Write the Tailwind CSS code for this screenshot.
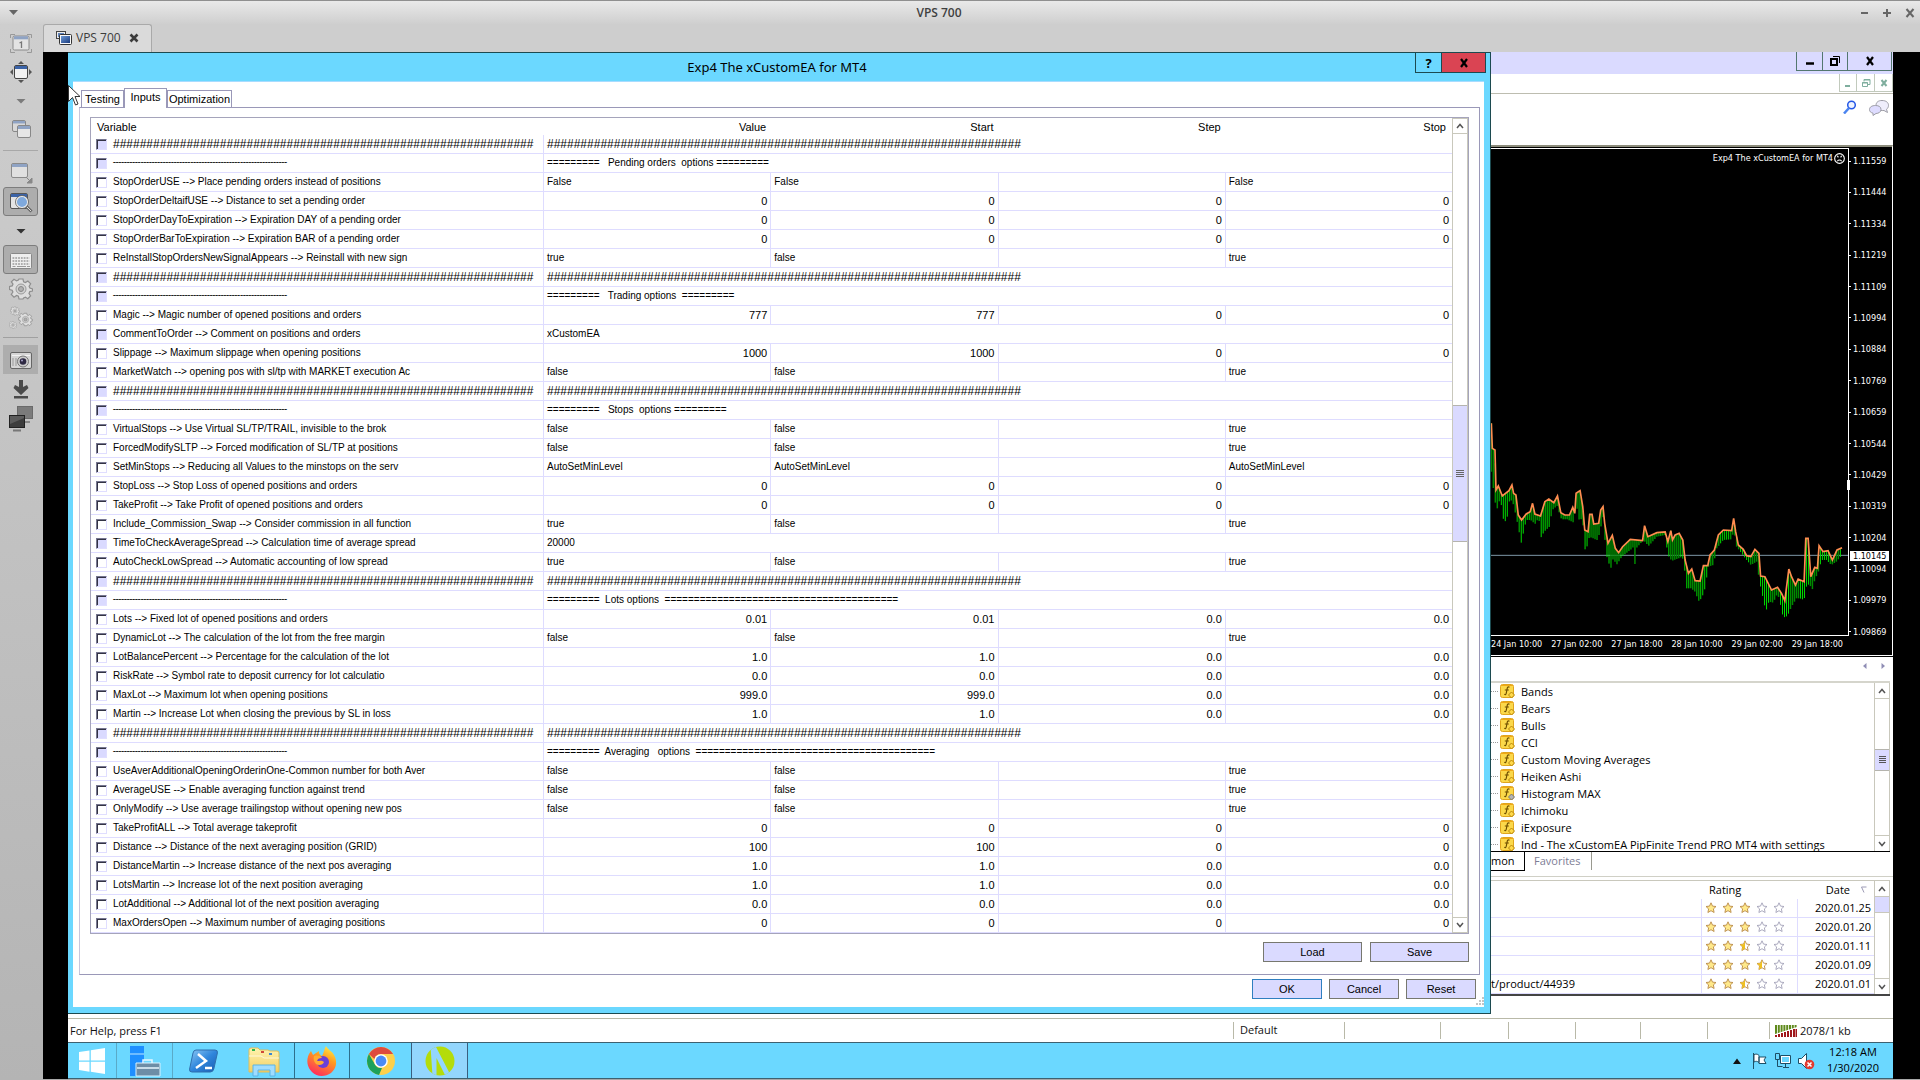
<!DOCTYPE html>
<html lang="en">
<head>
<meta charset="utf-8">
<title>VPS 700</title>
<script src="https://cdn.jsdelivr.net/npm/@tailwindcss/browser@4"></script>
</head>
<body class="flex min-h-screen flex-col overflow-x-hidden bg-[#b8b8b8] font-['Open_Sans','Noto_Sans',sans-serif] text-black">

<!-- shared icon symbols -->
<svg class="absolute size-0" aria-hidden="true">
  <defs>
    <linearGradient id="gFolder" x1="0" y1="0" x2="0" y2="1"><stop offset="0" stop-color="#fff3b0"/><stop offset="1" stop-color="#f3cf62"/></linearGradient>
    <linearGradient id="gPs" x1="0" y1="0" x2="1" y2="1"><stop offset="0" stop-color="#8cc8f4"/><stop offset=".5" stop-color="#2f86dc"/><stop offset="1" stop-color="#1a5cb0"/></linearGradient>
    <linearGradient id="gFox" x1=".8" y1="0" x2=".3" y2="1"><stop offset="0" stop-color="#fff04a"/><stop offset=".4" stop-color="#ff9a1f"/><stop offset="1" stop-color="#ff2a5f"/></linearGradient>
    <linearGradient id="gWin" x1="0" y1="0" x2="1" y2="1"><stop offset="0" stop-color="#6f9bd8"/><stop offset="1" stop-color="#17397c"/></linearGradient>
    <clipPath id="disc"><circle cx="15" cy="15" r="14.500"/></clipPath>
    <symbol id="gear" viewBox="0 0 24 24">
      <path d="M10 2h4l.6 2.800 1.800.8 2.500-1.600 2.800 2.800-1.600 2.500.8 1.800L23.500 12v2l-2.700.6-.8 1.800 1.600 2.500-2.800 2.800-2.400-1.600-1.800.8L14 22h-4l-.6-2.800-1.800-.8L5 20.200 2.300 17.400 3.900 15l-.8-1.800L.5 12.500v-3l2.700-.6.8-1.800L2.400 4.800 5 2.300 7.600 3.900l1.800-.8z" fill="#dedede" stroke="#8e8e8e" stroke-width="1.200"/>
      <circle cx="12" cy="12" r="5" fill="#d2d2d2" stroke="#9a9a9a"/><circle cx="12" cy="12" r="2.500" fill="#b0b0b0" stroke="#888"/>
    </symbol>
    <symbol id="fx" viewBox="0 0 15 15">
      <rect x=".5" y=".5" width="13" height="13" rx="2" fill="#fbd84a" stroke="#e0a51c"/>
      <path d="M1 1.500h12" stroke="#f0a818"/>
      <path d="M9.500 3.200c-2-.8-2.200.6-2.500 2.300L6.300 9c-.3 1.500-1 1.800-2 1.300M4.800 6h4" stroke="#6e4f00" stroke-width="1.200" fill="none"/>
    </symbol>
    <path id="star" d="M0-5.200 1.500-1.900 5-1.500 2.400.9 3.100 4.500 0 2.700-3.100 4.500-2.400.9-5-1.500-1.500-1.900z"/>
  </defs>
</svg>

<header class="flex h-6 items-center border-t border-[#8f8f8f] bg-linear-to-b from-[#e9e9e9] to-[#cfcfcf] px-1 text-[#3f3f3f]">
  <svg class="ml-1 h-2 w-3" viewBox="0 0 12 8"><path d="M1 1h9L5.500 6z" fill="#666"/></svg>
  <h1 class="flex-1 text-center text-xs font-semibold">VPS 700</h1>
  <div class="flex gap-[11px]">
    <button aria-label="Minimize" class="size-3"><svg viewBox="0 0 12 12"><path d="M3 6h7" stroke="#666" stroke-width="2"/></svg></button>
    <button aria-label="Maximize" class="size-3"><svg viewBox="0 0 12 12"><path d="M2 6h8M6 2v8" stroke="#666" stroke-width="2"/></svg></button>
    <button aria-label="Close" class="size-3"><svg viewBox="0 0 12 12"><path d="M2.500 2l7 8M9.500 2l-7 8" stroke="#666" stroke-width="2"/></svg></button>
  </div>
</header>

<div class="flex flex-1">
  <!-- viewer toolbar -->
  <aside class="flex w-[43px] shrink-0 flex-col bg-linear-to-b from-[#cecece] to-[#b4b4b4] pt-1 pr-[5px] pl-[3px]">
    <button aria-label="Original size" class="flex h-[29px] items-center justify-center"><svg class="size-6" viewBox="0 0 24 24" fill="none"><path d="M1.500 7V3.500H6M18 3.500h4.500V7M22.500 18v3.500H18M6 21.500H1.500V18" stroke="#999"/><rect x="4" y="5" width="16" height="14" rx="1.500" fill="#e3e3e3" stroke="#8a8a8a"/><path d="M5 6.800h14" stroke="#8fa3c4" stroke-width="3"/><path d="M10.500 12l2-1v6" stroke="#777" stroke-width="1.300"/></svg></button>
    <button aria-label="Fit window" class="flex h-[29px] items-center justify-center"><svg class="size-6" viewBox="0 0 24 24"><path d="M12 1l3 3H9zM12 23l3-3H9zM1 12l3-3v6zM23 12l-3-3v6z" fill="#555"/><rect x="5.500" y="5.500" width="13" height="13" rx="1.500" fill="#f1f1f1" stroke="#444"/><path d="M6 7.500h12" stroke="#3c64a8" stroke-width="3"/></svg></button>
    <button aria-label="Screen modes" class="flex h-[29px] items-center justify-center"><svg class="size-3" viewBox="0 0 12 12"><path d="M1.500 4h9L6 8.500z" fill="#7b7b7b"/></svg></button>
    <button aria-label="Duplicate window" class="flex h-[29px] items-center justify-center"><svg class="size-6" viewBox="0 0 24 24"><rect x="3.500" y="2.500" width="13" height="11" rx="1.500" fill="#d8d8d8" stroke="#888"/><path d="M4 4.200h12" stroke="#8fa3c4" stroke-width="2.500"/><rect x="8.500" y="7.500" width="13" height="12" rx="1.500" fill="#e6e6e6" stroke="#888"/><path d="M9 9.500h12" stroke="#8fa3c4" stroke-width="3"/></svg></button>
    <hr class="mt-1.5 mb-[7px] border-[#a8a8a8]">
    <button aria-label="Resize" class="flex h-[29px] items-center justify-center"><svg class="size-6" viewBox="0 0 24 24"><rect x="2.500" y="2.500" width="16" height="14" rx="1.500" fill="#e0e0e0" stroke="#8a8a8a"/><path d="M3 4.500h15" stroke="#8fa3c4" stroke-width="3"/><path d="M17 16l5 5M23 17v5h-5z" stroke="#888" fill="#888"/></svg></button>
    <button aria-label="Scaled mode" class="flex h-[29px] items-center justify-center rounded-[3px] border border-[#7d7d7d] bg-[#adadad]"><svg class="size-6" viewBox="0 0 24 24"><rect x="1.500" y="3.500" width="17" height="15" rx="1.500" fill="#e4e4e4" stroke="#555"/><path d="M2 5.500h16" stroke="#3c64a8" stroke-width="3"/><path d="M17.500 16.500l5 5" stroke="#666" stroke-width="3"/><path d="M18 17l4 4" stroke="#ddd"/><circle cx="13" cy="12" r="5.800" fill="#7fa9dd" stroke="#f0f0f0" stroke-width="1.500"/><circle cx="13" cy="12" r="6.500" fill="none" stroke="#444" stroke-width=".7"/></svg></button>
    <button aria-label="Scale options" class="flex h-[29px] items-center justify-center"><svg class="size-3" viewBox="0 0 12 12"><path d="M1.500 4h9L6 8.500z" fill="#333"/></svg></button>
    <button aria-label="Grab keyboard" class="flex h-[29px] items-center justify-center rounded-[3px] border border-[#7d7d7d] bg-[#adadad]"><svg class="size-6" viewBox="0 0 24 24"><rect x="1.500" y="5.500" width="21" height="15" rx="1" fill="#eee" stroke="#888"/><path d="M3.500 10h17M3.500 13h17M3.500 16h17" stroke="#9a9a9a" stroke-width="1.500" stroke-dasharray="1.800 1"/><path d="M3.500 18.500h3M8 18.500h9M18 18.500h3" stroke="#9a9a9a"/></svg></button>
    <button aria-label="Preferences" class="flex h-[29px] items-center justify-center"><svg class="size-6"><use href="#gear"/></svg></button>
    <button aria-label="Tools" class="flex h-[29px] items-center justify-center"><svg class="size-6" viewBox="0 0 24 24"><use href="#gear" x="1" y="0" width="10" height="10"/><use href="#gear" x="0" y="15" width="8" height="8"/><use href="#gear" x="9" y="6" width="15" height="15"/></svg></button>
    <hr class="mt-[5px] mb-[7px] border-[#a0a0a0]">
    <button aria-label="Screenshot" class="flex h-[29px] items-center justify-center bg-[#adadad]"><svg class="size-6" viewBox="0 0 24 24"><rect x="1.500" y="4.500" width="21" height="16" rx="1.500" fill="#d6d6d6" stroke="#666"/><path d="M3 7.500h18" stroke="#f4f4f4"/><path d="M4 10v8M7 10v8" stroke="#999"/><circle cx="14" cy="13.500" r="5.500" fill="#ccc" stroke="#777"/><circle cx="14" cy="13.500" r="3.300" fill="#2f2a44"/><circle cx="13" cy="12.500" r="1" fill="#aaa6cc"/></svg></button>
    <button aria-label="Minimize window" class="flex h-[29px] items-center justify-center"><svg class="size-6" viewBox="0 0 24 24"><path d="M10 3h4v7l4-2 1.500 3L12 18l-7.500-7L6 8l4 2zM5 19h14v2.500H5z" fill="#4a4a4a"/></svg></button>
    <button aria-label="Disconnect" class="flex h-[29px] items-center justify-center"><svg class="h-7 w-6" viewBox="0 0 24 28"><rect x="8.500" y="2.500" width="15" height="12" fill="#7b7b7b" stroke="#6a6a6a"/><path d="M15 18h6" stroke="#888" stroke-width="2"/><rect x=".5" y="11.500" width="15" height="12" fill="#3d3d3d" stroke="#222"/><path d="M1 20L15 14v-2H1z" fill="#5c5c5c"/><path d="M4 26.500h8" stroke="#777" stroke-width="2"/></svg></button>
  </aside>

  <div class="flex min-w-0 flex-1 flex-col">
    <div class="flex h-7 items-end bg-[#cecece]">
      <div class="flex h-7 w-[109px] items-center rounded-t-[3px] border border-b-0 border-[#a9a9a9] bg-[#dadada] pb-px pl-3 text-[#3c3c3c]">
        <svg class="size-4" viewBox="0 0 16 16"><rect x=".5" y="1.500" width="9" height="7" fill="#eee" stroke="#444"/><path d="M2 3h6v4H2z" fill="#5f83bd"/><rect x="3.500" y="4.500" width="12" height="10" rx="1" fill="#fafafa" stroke="#333"/><rect x="5" y="6" width="9" height="7" fill="url(#gWin)"/></svg>
        <span class="ml-1 text-xs">VPS 700</span>
        <button aria-label="Close tab" class="ml-2 size-2.5"><svg viewBox="0 0 10 10"><path d="M1.500 1.500l7 7M8.500 1.500l-7 7" stroke="#3c3c3c" stroke-width="2.600"/></svg></button>
      </div>
    </div>

    <div class="flex flex-1 flex-col bg-black pr-[27px] pl-[25px]">
      <div class="flex bg-white">
        <!-- expert properties window -->
        <section class="relative min-w-0 flex-1 border-t border-r border-b border-[#1c4a50] bg-[#6bd8ff] pr-1.5 pb-1.5 pl-[5px]">
          <svg class="absolute top-8 left-0 h-[22px] w-[14px]" viewBox="0 0 14 22"><path d="M.5.500v16l4-4 3 7.500 2.500-1L7 11.500h5z" fill="#fff" stroke="#333"/></svg>
          <div class="-mr-0.5 flex h-7 items-start">
            <h2 class="flex-1 self-center pl-[66px] text-center font-['Noto_Sans'] text-[13px] leading-5">Exp4 The xCustomEA for MT4</h2>
            <div class="flex border border-t-0 border-[#1c4a50] text-[13px] leading-[18px] font-bold">
              <button class="h-[19px] w-[26px] border-r border-[#1c4a50]">?</button>
              <button aria-label="Close" class="flex h-[19px] w-[43px] items-center justify-center bg-[#da4453]"><svg class="size-2.5" viewBox="0 0 10 10"><path d="M2 1l6 8M8 1L2 9" stroke="#000" stroke-width="2.200"/></svg></button>
            </div>
          </div>
          <div class="border-t border-[#a8dcff] bg-white pt-1.5 pr-1 pb-2 pl-1.5 font-['Liberation_Sans',Arial,sans-serif] text-[10px] leading-3">
            <div class="flex items-end pl-0.5 text-[11px]" role="tablist">
              <button role="tab" class="h-[17px] w-[43px] border border-b-0 border-[#9a98b8]">Testing</button>
              <button role="tab" aria-selected="true" class="-mb-px h-5 w-[43px] border border-b-0 border-[#9a98b8] bg-white pb-1">Inputs</button>
              <button role="tab" class="h-[17px] w-[65px] border border-b-0 border-[#9a98b8]">Optimization</button>
            </div>
            <div class="border border-[#9a98b8] border-l-[#c8c6dc] px-2.5 pt-[9px] pb-3">
              <div class="flex border border-[#a5a4bb]">
                <table class="w-full min-w-0 flex-1 table-fixed border-separate border-spacing-0">
                  <thead>
                    <tr class="h-[17px] text-[11px]">
                      <th class="w-[452px] pl-1.5 text-left font-normal">Variable</th>
                      <th class="pr-1 text-right font-normal">Value</th>
                      <th class="pr-1 text-right font-normal">Start</th>
                      <th class="pr-1 text-right font-normal">Step</th>
                      <th class="pr-1.5 text-right font-normal">Stop</th>
                    </tr>
                  </thead>
                  <tbody id="inputs"></tbody>
                </table>
                <div class="flex w-4 flex-col border-x border-[#c9c8bc]">
                  <button aria-label="Scroll up" class="flex h-4 items-center justify-center border-y border-[#c9c8bc]"><svg class="h-1.5 w-2" viewBox="0 0 8 6"><path d="M1 5l3-3.500L7 5" fill="none" stroke="#555" stroke-width="1.500"/></svg></button>
                  <div class="flex-[270]"></div>
                  <div class="flex h-[137px] flex-col items-center justify-center gap-px border-y border-[#b5b4ae] bg-[#dadaff]"><i class="h-px w-2 bg-[#666]"></i><i class="h-px w-2 bg-[#666]"></i><i class="h-px w-2 bg-[#666]"></i><i class="h-px w-2 bg-[#666]"></i></div>
                  <div class="flex-[374]"></div>
                  <button aria-label="Scroll down" class="flex h-4 items-center justify-center border-y border-[#c9c8bc]"><svg class="h-1.5 w-2" viewBox="0 0 8 6"><path d="M1 1l3 3.500L7 1" fill="none" stroke="#555" stroke-width="1.500"/></svg></button>
                </div>
              </div>
              <div class="flex justify-end gap-2 pt-2 text-[11px]">
                <button class="h-5 w-[99px] border border-[#77786f] bg-[#dadaff]">Load</button>
                <button class="h-5 w-[99px] border border-[#77786f] bg-[#dadaff]">Save</button>
              </div>
            </div>
            <div class="flex justify-end gap-[7px] pt-1 pr-1 text-[11px]">
              <button class="h-5 w-[70px] border border-[#2f7fc0] bg-[#dadaff]">OK</button>
              <button class="h-5 w-[70px] border border-[#77786f] bg-[#dadaff]">Cancel</button>
              <button class="h-5 w-[70px] border border-[#77786f] bg-[#dadaff]">Reset</button>
            </div>
          </div>
          <svg class="absolute right-1.5 bottom-2 size-2" viewBox="0 0 8 8" fill="#c4c4c4"><path d="M6 0h2v2H6zM3 3h2v2H3zM6 3h2v2H6zM0 6h2v2H0zM3 6h2v2H3zM6 6h2v2H6z"/></svg>
        </section>

        <!-- terminal window behind -->
        <section class="flex w-[402px] shrink-0 flex-col overflow-hidden">
          <div class="flex h-[22px] justify-end bg-[#dadaff] pr-px">
            <div class="flex h-[19px] border border-t-0 border-[#53776f]">
              <button aria-label="Minimize" class="flex w-[26px] items-center justify-center border-r border-[#53776f]"><svg class="size-3" viewBox="0 0 12 12"><path d="M2 8.500h8" stroke="#000" stroke-width="2.500"/></svg></button>
              <button aria-label="Restore" class="flex w-[25px] items-center justify-center border-r border-[#53776f]"><svg class="size-3" viewBox="0 0 12 12" fill="none" stroke="#000"><rect x="2" y="4" width="6" height="6" stroke-width="2"/><path d="M4 1.500h6.500V8"/></svg></button>
              <button aria-label="Close" class="flex w-[43px] items-center justify-center"><svg class="size-3" viewBox="0 0 12 12"><path d="M3 2l6 8M9 2L3 10" stroke="#000" stroke-width="2.200"/></svg></button>
            </div>
          </div>
          <div class="flex h-5 justify-end border-b border-[#bdbdb0]">
            <div class="flex h-[18px] border border-t-0 border-[#c2cabd]">
              <button aria-label="Minimize chart" class="flex w-[17px] items-center justify-center border-r border-[#c2cabd]"><svg class="size-2.5" viewBox="0 0 10 10"><path d="M2 8h5" stroke="#7fae9e" stroke-width="2"/></svg></button>
              <button aria-label="Restore chart" class="flex w-[18px] items-center justify-center border-r border-[#c2cabd]"><svg class="size-2.5" viewBox="0 0 10 10" fill="none" stroke="#7fae9e"><path d="M3 3.500V1.500h6v5H7M1.500 4.500h5v4h-5zM3 2h6M1 5h6"/></svg></button>
              <button aria-label="Close chart" class="flex w-[17px] items-center justify-center"><svg class="size-2.5" viewBox="0 0 10 10"><path d="M2.500 2l5 6M7.500 2l-5 6" stroke="#7fae9e" stroke-width="2"/></svg></button>
            </div>
          </div>
          <div class="flex h-[51px] justify-end gap-3 pt-1.5 pr-1">
            <button aria-label="Search" class="size-3.5"><svg viewBox="0 0 14 14"><circle cx="8.500" cy="5" r="3.800" fill="#eef3ff" stroke="#2457e6" stroke-width="1.500"/><path d="M6 8l-5 5.500" stroke="#4a84f0" stroke-width="2.500"/></svg></button>
            <button aria-label="Chat" class="h-4 w-5"><svg viewBox="0 0 20 16"><path d="M13 .5c4 0 6.500 2 6.500 4.800 0 2-.9 3.200-2 4l1 3.200-3.500-2c-5 .4-8-1.500-8-5S9.500.5 13 .5z" fill="#efeefc" stroke="#9d9da6"/><path d="M6.500 5.500c3.500 0 5.500 1.500 5.500 4s-2.500 4-5 4L4 15.500v-2.300C1.500 12.500.5 11.500.5 9.500c0-2.500 2.500-4 6-4z" fill="#dedcff" stroke="#9d9da6"/></svg></button>
          </div>

          <div class="flex min-h-0 flex-1 flex-col border-t-2 border-r border-b border-[#8c8c7c] border-r-white border-b-white bg-black pt-px text-[9px] leading-3 text-white">
            <div class="flex min-h-0 flex-1 font-['DejaVu_Sans_Condensed','DejaVu_Sans',sans-serif]">
              <div class="relative flex min-w-0 flex-1 flex-col">
                <div class="flex min-h-0 flex-1 border-t border-r border-b border-white">
                  <svg id="chart" class="h-0 min-h-full w-full" viewBox="0 0 358 486" preserveAspectRatio="none"></svg>
                </div>
                <div class="absolute top-1 right-1 flex items-center gap-px">
                  Exp4 The xCustomEA for MT4
                  <svg class="size-[11px]" viewBox="0 0 10 10" fill="none" stroke="#fff"><circle cx="5" cy="5" r="4.400"/><path d="M3 2.500l1 1.500M7 2.500L6 4M3 7.500c1-1.500 3-1.500 4 0"/></svg>
                </div>
                <div class="flex h-[19px] justify-between pt-0.5 pr-1.5 whitespace-nowrap">
                  <span>24 Jan 10:00</span><span>27 Jan 02:00</span><span>27 Jan 18:00</span><span>28 Jan 10:00</span><span>29 Jan 02:00</span><span>29 Jan 18:00</span>
                </div>
              </div>
              <div class="relative w-[43px] pt-[7px] pb-[17px]">
                <div id="prices" class="flex h-full flex-col justify-between"></div>
                <i class="absolute top-[332px] -left-0.5 h-[10px] w-[3px] bg-white"></i>
                <span class="absolute top-[403px] left-px h-[10px] w-[39px] bg-white pl-[3px] text-[9px] leading-[10px] text-black">1.10145</span>
              </div>
            </div>
          </div>

          <div class="flex h-[25px] items-start justify-end gap-2.5 border-t border-black bg-white pt-[5px] pr-1.5">
            <svg class="size-2" viewBox="0 0 8 8"><path d="M5.500 1v6L2 4z" fill="#8f8db5"/></svg>
            <svg class="size-2" viewBox="0 0 8 8"><path d="M2.500 1v6L6 4z" fill="#8f8db5"/></svg>
          </div>
          <div class="mr-[3px] flex h-[171px] border-t-2 border-b border-[#d5d5cc] border-b-black">
            <ul id="tree" class="min-w-0 flex-1 overflow-hidden text-[11px] leading-[17px]"></ul>
            <div class="flex w-4 flex-col border-x border-[#c9c8bc]">
              <button aria-label="Scroll up" class="flex h-4 items-center justify-center border-b border-[#c9c8bc]"><svg class="h-1.5 w-2" viewBox="0 0 8 6"><path d="M1 5l3-3.500L7 5" fill="none" stroke="#555" stroke-width="1.500"/></svg></button>
              <div class="flex-[50]"></div>
              <div class="flex h-[22px] flex-col items-center justify-center gap-px border-y border-[#b5b4ae] bg-[#dadaff]"><i class="h-px w-[7px] bg-[#555]"></i><i class="h-px w-[7px] bg-[#555]"></i><i class="h-px w-[7px] bg-[#555]"></i><i class="h-px w-[7px] bg-[#555]"></i></div>
              <div class="flex-[65]"></div>
              <button aria-label="Scroll down" class="flex h-4 items-center justify-center border-t border-[#c9c8bc]"><svg class="h-1.5 w-2" viewBox="0 0 8 6"><path d="M1 1l3 3.500L7 1" fill="none" stroke="#555" stroke-width="1.500"/></svg></button>
            </div>
          </div>
          <div class="flex h-[25px] items-start border-b border-[#d0d0c6] text-[11px] leading-[18px]">
            <button class="h-[19px] w-[34px] border-r border-b border-black text-left">mon</button>
            <button class="ml-[9px] border-r border-[#9a9a90] pr-2.5 text-[#7d7d95]">Favorites</button>
          </div>
          <div class="mt-[3px] mr-[3px] mb-[18px] flex border-t border-b-2 border-[#c9c8bc] border-b-[#444]">
            <table class="w-full min-w-0 flex-1 table-fixed border-separate border-spacing-0 text-[11px] leading-3">
              <thead><tr class="h-[18px]"><th></th><th class="w-24 pl-2 text-left font-normal">Rating</th><th class="w-[77px] pr-1.5 font-normal"><span class="flex items-center justify-end gap-2.5">Date<svg class="size-2" viewBox="0 0 8 8"><path d="M6.500 1h-5L4 6.500" fill="none" stroke="#9c9ab5"/></svg></span></th></tr></thead>
              <tbody id="ratings"></tbody>
            </table>
            <div class="flex w-4 flex-col border-x border-[#c9c8bc]">
              <button aria-label="Scroll up" class="flex h-4 items-center justify-center border-b border-[#c9c8bc]"><svg class="h-1.5 w-2" viewBox="0 0 8 6"><path d="M1 5l3-3.500L7 5" fill="none" stroke="#555" stroke-width="1.500"/></svg></button>
              <div class="h-4 border-b border-[#c9c8bc] bg-[#dadaff]"></div>
              <div class="flex-1"></div>
              <button aria-label="Scroll down" class="flex h-4 items-center justify-center border-t border-[#c9c8bc]"><svg class="h-1.5 w-2" viewBox="0 0 8 6"><path d="M1 1l3 3.500L7 1" fill="none" stroke="#555" stroke-width="1.500"/></svg></button>
            </div>
          </div>
        </section>
      </div>

      <!-- status bar -->
      <div class="bg-white pt-1">
        <div class="flex h-6 items-center border-t border-[#b9b9a8] text-[11px] leading-4 text-[#111]">
          <span class="flex-1 pl-0.5">For Help, press F1</span>
          <span class="h-[17px] w-[111px] border-l border-[#b9b9a8] pl-1.5">Default</span>
          <span class="h-[17px] w-24 border-l border-[#b9b9a8]"></span>
          <span class="h-[17px] w-[68px] border-l border-[#b9b9a8]"></span>
          <span class="h-[17px] w-[67px] border-l border-[#b9b9a8]"></span>
          <span class="h-[17px] w-[65px] border-l border-[#b9b9a8]"></span>
          <span class="h-[17px] w-[67px] border-l border-[#b9b9a8]"></span>
          <span class="h-[17px] w-[62px] border-l border-[#b9b9a8]"></span>
          <span class="flex h-[17px] w-[124px] items-center gap-[3px] border-l border-[#b9b9a8] pl-[5px]">
            <svg class="h-3 w-[22px]" viewBox="0 0 22 12"><path d="M0 6h22" stroke="#5f8a1c" stroke-width="12" stroke-dasharray="2 .8"/><path d="M0 12V9L22 2v10z" fill="#fff"/><path d="M1 12v-2M4 12V9M7 12V8M10 12V7M13 12V6M16 12V5M19 12V4M21.500 12V4" stroke="#a0181c" stroke-width="2"/></svg>2078/1 kb</span>
        </div>
      </div>

      <!-- Windows taskbar -->
      <nav class="flex h-[37px] items-stretch border-y border-[#3d6170] bg-[#6bd8ff]">
        <button aria-label="Start" class="flex w-[49px] items-center justify-center border-r border-[#5aaac8]"><svg class="h-7 w-7" viewBox="0 0 28 28" fill="#fff"><path d="M1 5l10.500-1.600v10H1zM12.800 3.200L27 1v12.400H12.800zM1 14.700h10.500v10L1 23zM12.800 14.700H27V27l-14.200-2.200z"/></svg></button>
        <button aria-label="Server Manager" class="flex w-14 items-center justify-center border-r border-[#5aaac8]"><svg class="size-8" viewBox="0 0 32 32"><path d="M1 1h14v30H1z" fill="#1e8fff"/><path d="M1 9h14" stroke="#bfe8ff"/><path d="M7 18h24v13H7z" fill="#6d8da6" stroke="#d8f2ff"/><path d="M14 18v-3h9v3M8 23h22" stroke="#e6f6ff" fill="none" stroke-width="1.500"/></svg></button>
        <button aria-label="PowerShell" class="flex w-[61px] items-center justify-center"><svg class="h-7 w-8" viewBox="0 0 32 28"><path d="M8 3h19q3 0 2.400 3l-3.600 16q-.8 3-3.600 3H4q-3 0-2.400-3L5 6q.6-3 3-3z" fill="url(#gPs)" stroke="#2f6fae"/><path d="M10 7l8 7-10 7M17 21h7" fill="none" stroke="#fff" stroke-width="2.500"/></svg></button>
        <button aria-label="File Explorer" class="flex w-[60px] items-center justify-center"><svg class="h-8 w-8" viewBox="0 0 32 32"><path d="M1 5q0-2 2-2h7l2 2h8l2 1h7q2 0 2 2v19H1z" fill="url(#gFolder)" stroke="#e0bd5a"/><path d="M4 4h3v2H4z" fill="#2eb84a"/><path d="M13 6h3v2h-3z" fill="#d0483a"/><path d="M21 8h3v2h-3z" fill="#3a86d0"/><path d="M1 11h12l3 2h15" stroke="#fff8d8" fill="none"/><path d="M5 31V20h22v11h-5v-6H10v6z" fill="#9fdcff" stroke="#5bb4e6"/></svg></button>
        <button aria-label="Firefox" class="flex w-14 items-center justify-center border-x border-[#2d6f8c]"><svg class="size-8" viewBox="0 0 32 32"><path d="M20 1c1 3 6 5 8 9 4 7 2 14-3 18-6 4-14 4-19-1C1 22 0 15 3 9l2-3 2 4 6-4c0 3 1 4 3 5 2-3 2-7 4-10z" fill="url(#gFox)"/><circle cx="17" cy="17" r="6" fill="#6a3fd8"/><path d="M8 11c4-1 7 0 8 2-3 0-5 1-5 3 2 0 5-1 7 1-1 3-5 4-8 2-2-2-3-5-2-8z" fill="#ffac33"/></svg></button>
        <button aria-label="Chrome" class="flex w-[61px] items-center justify-center"><svg class="h-[30px] w-[30px]" viewBox="0 0 30 30"><circle cx="15" cy="15" r="14" fill="#fdd04a"/><path d="M2.900 8A14 14 0 0 1 27.100 8H15a7 7 0 0 0-6.600 5z" fill="#dd4b3e"/><path d="M2.900 8l6 10.500A7 7 0 0 0 16 22l-3 6.900A14 14 0 0 1 2.900 8z" fill="#1da15a"/><circle cx="15" cy="15" r="6.800" fill="#fff"/><circle cx="15" cy="15" r="5.400" fill="#4a8bf5"/></svg></button>
        <button aria-label="Trading terminal" class="flex w-[57px] items-center justify-center border-x border-[#3a5f80] bg-[#93d6fd]"><svg class="h-[30px] w-[30px]" viewBox="0 0 30 30"><g clip-path="url(#disc)"><path d="M0 0h30v30H0z" fill="#b4dc0a"/><path d="M5.500 0h5l14 27-4 3L11.500 12v18h-4z" fill="#93d6fd"/></g></svg></button>
        <div class="flex flex-1 items-center justify-end pr-3.5 text-right">
          <svg class="mr-2 h-2 w-3" viewBox="0 0 12 8"><path d="M2 7h8L6 1.500z" fill="#111"/></svg>
          <svg class="mr-[5px] size-[18px]" viewBox="0 0 18 18" stroke="#1d4f66" fill="#fff"><path d="M2.500 1v16M3 2.500c3-1 4 0 5 1v7c-2-1.500-3-1.500-5-.5zM8 5h7l-2 3 2 3.500H8z"/></svg>
          <svg class="mr-[5px] size-[18px]" viewBox="0 0 18 18" stroke="#1d4f66" fill="#fff"><path d="M6.500 3.500h10v8h-10zM9 15.500h6M11.500 12v3" /><path d="M8 5h7v5H8z" fill="#6bd8ff" stroke="none"/><path d="M1.500 1.500h4v6h-4zM3.500 8v6.500h5" fill="none"/></svg>
          <svg class="mr-3 size-[18px]" viewBox="0 0 18 18"><path d="M1.500 6.500h3l5-5v15l-5-5h-3z" fill="#fff" stroke="#1d4f66"/><circle cx="12.500" cy="12.500" r="4.800" fill="#e23b30"/><path d="M10.500 10.500l4 4M14.500 10.500l-4 4" stroke="#fff" stroke-width="1.500"/></svg>
          <div class="w-[52px] pb-px text-center text-[11px] leading-4 whitespace-nowrap">12:18 AM<br>1/30/2020</div>
        </div>
      </nav>
      <div class="-mr-[27px] -ml-[25px] flex-1 bg-[#a8a8a8]"></div>
    </div>
  </div>
</div>

<script>
  // [name, value, start, step, stop]; a single value spans all columns, '#' and '-' are separators
  const rows = [
    ['#'], ['-', '=========   Pending orders  options ========='],
    ['StopOrderUSE --> Place pending orders instead of positions', 'False', 'False', '', 'False'],
    ['StopOrderDeltaifUSE --> Distance to set a pending order', '0', '0', '0', '0'],
    ['StopOrderDayToExpiration --> Expiration DAY of a pending order', '0', '0', '0', '0'],
    ['StopOrderBarToExpiration --> Expiration BAR of a pending order', '0', '0', '0', '0'],
    ['ReInstallStopOrdersNewSignalAppears --> Reinstall with new sign', 'true', 'false', '', 'true'],
    ['#'], ['-', '=========   Trading options  ========='],
    ['Magic --> Magic number of opened positions and orders', '777', '777', '0', '0'],
    ['CommentToOrder --> Comment on positions and orders', 'xCustomEA'],
    ['Slippage --> Maximum slippage when opening positions', '1000', '1000', '0', '0'],
    ['MarketWatch --> opening pos with sl/tp with MARKET execution Ac', 'false', 'false', '', 'true'],
    ['#'], ['-', '=========   Stops  options ========='],
    ['VirtualStops --> Use Virtual SL/TP/TRAIL, invisible to the brok', 'false', 'false', '', 'true'],
    ['ForcedModifySLTP --> Forced modification of SL/TP at positions', 'false', 'false', '', 'true'],
    ['SetMinStops --> Reducing all Values to the minstops on the serv', 'AutoSetMinLevel', 'AutoSetMinLevel', '', 'AutoSetMinLevel'],
    ['StopLoss --> Stop Loss of opened positions and orders', '0', '0', '0', '0'],
    ['TakeProfit --> Take Profit of opened positions and orders', '0', '0', '0', '0'],
    ['Include_Commission_Swap --> Consider commission in all function', 'true', 'false', '', 'true'],
    ['TimeToCheckAverageSpread --> Calculation time of average spread', '20000'],
    ['AutoCheckLowSpread --> Automatic accounting of low spread', 'true', 'false', '', 'true'],
    ['#'], ['-', '=========  Lots options  ' + '='.repeat(40)],
    ['Lots --> Fixed lot of opened positions and orders', '0.01', '0.01', '0.0', '0.0'],
    ['DynamicLot --> The calculation of the lot from the free margin', 'false', 'false', '', 'true'],
    ['LotBalancePercent --> Percentage for the calculation of the lot', '1.0', '1.0', '0.0', '0.0'],
    ['RiskRate --> Symbol rate to deposit currency for lot calculatio', '0.0', '0.0', '0.0', '0.0'],
    ['MaxLot --> Maximum lot when opening positions', '999.0', '999.0', '0.0', '0.0'],
    ['Martin --> Increase Lot when closing the previous by SL in loss', '1.0', '1.0', '0.0', '0.0'],
    ['#'], ['-', '=========  Averaging   options  ' + '='.repeat(41)],
    ['UseAverAdditionalOpeningOrderinOne-Common number for both Aver', 'false', 'false', '', 'true'],
    ['AverageUSE --> Enable averaging function against trend', 'false', 'false', '', 'true'],
    ['OnlyModify --> Use average trailingstop without opening new pos', 'false', 'false', '', 'true'],
    ['TakeProfitALL --> Total average takeprofit', '0', '0', '0', '0'],
    ['Distance --> Distance of the next averaging position (GRID)', '100', '100', '0', '0'],
    ['DistanceMartin --> Increase distance of the next pos averaging', '1.0', '1.0', '0.0', '0.0'],
    ['LotsMartin --> Increase lot of the next position averaging', '1.0', '1.0', '0.0', '0.0'],
    ['LotAdditional --> Additional lot of the next position averaging', '0.0', '0.0', '0.0', '0.0'],
    ['MaxOrdersOpen --> Maximum number of averaging positions', '0', '0', '0', '0'],
  ];
  const cellBase = 'h-[19px] border-b border-l border-[#dedcff] px-[3px] whitespace-pre ';
  document.getElementById('inputs').innerHTML = rows.map(([name, ...v]) => {
    let textCls = 'text-[10px]';
    if (name === '#') { name = '#'.repeat(63); v = ['#'.repeat(71)]; textCls = 'text-[12px]'; }
    else if (name === '-') { name = '-'.repeat(63); textCls = "font-['Roboto'] text-[10px]"; }
    const single = v.length === 1;
    const box = single ? 'bg-[#dadaff]' : 'bg-white';
    const label = `<td class="h-[19px] border-b border-[#dedcff] pl-[5px]"><label class="flex items-center gap-1.5 overflow-hidden whitespace-nowrap"><input type="checkbox" class="size-[11px] shrink-0 appearance-none border border-t-[#777790] border-r-[#e0deff] border-b-[#e0deff] border-l-[#777790] shadow-[inset_1px_1px_0_#333344] ${box}"><span class="${textCls}">${name.replace(/>/g, '&gt;')}</span></label></td>`;
    if (single) {
      const c = v[0][0] === '#' ? 'text-[12px]' : 'text-[10px]';
      return `<tr>${label}<td colspan="4" class="${cellBase}${c}">${v[0]}</td></tr>`;
    }
    return `<tr>${label}${v.map(t => `<td class="${cellBase}${/^\d/.test(t) ? 'text-right text-[11px]' : 'text-left text-[10px]'}">${t}</td>`).join('')}</tr>`;
  }).join('');

  document.getElementById('prices').innerHTML = ['1.11559','1.11444','1.11334','1.11219','1.11109','1.10994','1.10884','1.10769','1.10659','1.10544','1.10429','1.10319','1.10204','1.10094','1.09979','1.09869']
    .map(p => `<span class="flex items-center gap-0.5"><i class="h-px w-0.5 bg-white"></i>${p}</span>`).join('');

  document.getElementById('tree').innerHTML = ['Bands','Bears','Bulls','CCI','Custom Moving Averages','Heiken Ashi','Histogram MAX','Ichimoku','iExposure','Ind - The xCustomEA PipFinite Trend PRO MT4 with settings']
    .map(t => `<li class="flex h-[17px] items-center whitespace-nowrap"><i class="w-[7px] border-t border-dotted border-[#999]"></i><svg class="mr-1.5 ml-0.5 size-[15px]" viewBox="0 0 15 15"><use href="#fx" width="15" height="15"/><path d="M11.500 8l3 3-3 3-3-3z" fill="${t === 'Histogram MAX' ? '#b5b5b5' : '#ffd94a'}" stroke="${t === 'Histogram MAX' ? '#777' : '#b8860b'}"/></svg>${t}</li>`).join('');

  document.getElementById('ratings').innerHTML = [['',3,'2020.01.25'],['',3,'2020.01.20'],['',2.5,'2020.01.11'],['',3.5,'2020.01.09'],['t/product/44939',2.5,'2020.01.01']]
    .map(([name, r, d]) => {
      let s = '';
      for (let i = 0; i < 5; i++) {
        const x = 8 + i * 17, full = r >= i + 1, half = !full && r > i;
        s += `<use href="#star" x="${x}" y="6" fill="${full ? '#ffe98a' : '#fff'}" stroke="${full || half ? '#b98a4a' : '#a3a1b8'}"/>`;
        if (half) s += `<path d="M${x} 1l-1.500 3.200-3.500.4 2.600 2.400-.7 3.500 3.100-1.800z" fill="#f0c020"/>`;
      }
      return `<tr class="h-[19px]"><td class="border-b border-[#dedcff]">${name}</td><td class="border-b border-l border-[#dedcff]"><svg class="ml-px h-3 w-[88px]" viewBox="0 0 88 12" stroke-width=".9">${s}</svg></td><td class="border-b border-l border-[#dedcff] pr-[3px] text-right">${d}</td></tr>`;
    }).join('');

  // chart: trend line (top edge) and histogram lows, in thirds of a pixel
  const top_ = [157,130,160,205,168,210,171,330,178,318,190,348,210,332,219,315,224,340,231,345,238,405,248,420,262,402,274,395,281,370,288,402,305,408,318,365,330,357,345,368,356,348,366,398,378,405,392,405,402,382,408,400,412,340,424,332,432,380,438,450,448,455,453,403,460,403,465,432,480,430,486,390,493,380,498,430,508,490,521,466,530,505,540,518,552,500,575,478,612,482,618,437,628,470,655,458,680,456,688,485,697,452,702,480,710,465,722,460,733,480,740,540,750,580,760,567,770,602,785,603,795,557,808,557,815,525,828,510,840,465,855,450,880,452,886,415,892,455,900,495,915,508,925,527,938,530,950,508,962,520,967,588,980,590,1000,630,1018,622,1030,640,1040,662,1052,567,1060,590,1072,615,1080,597,1098,605,1103,475,1110,475,1118,590,1130,562,1138,565,1143,497,1155,515,1170,512,1183,540,1197,510,1212,503];
  const low = [157,275,168,365,175,385,185,350,190,413,203,428,210,365,220,360,232,410,247,488,262,420,275,420,290,432,300,410,305,475,316,455,332,440,340,390,355,378,368,418,385,418,405,428,412,370,424,435,430,400,440,520,452,470,475,480,485,455,492,400,503,525,516,567,525,530,532,557,550,530,575,510,586,500,589,552,593,505,615,480,630,498,655,470,680,465,688,525,700,543,720,535,732,530,742,590,745,625,758,625,770,635,780,663,790,655,800,625,810,560,825,555,835,505,855,480,880,478,886,450,895,500,910,520,925,540,938,555,955,545,965,610,983,695,992,665,1005,668,1018,640,1025,665,1035,713,1048,708,1060,680,1075,655,1085,655,1098,660,1105,620,1115,610,1121,635,1130,600,1143,570,1150,540,1165,540,1180,555,1195,545,1212,525];
  const at = (a, x) => { for (let i = 2; i < a.length; i += 2) if (x <= a[i]) return a[i-1] + (a[i+1] - a[i-1]) * (x - a[i-2]) / (a[i] - a[i-2]); return a[a.length - 1]; };
  let bars = '';
  for (let x = 157, i = 0; x <= 1212; x += 6, i++) {
    const t = at(top_, x), b = Math.max(at(low, x), t + 6), bright = (Math.floor(i / 5) % 2) === 1;
    bars += bright ? `<path d="M${x} ${t}V${b}" stroke="#00e000" stroke-width="3"/>` : `<path d="M${x} ${t}V${b}" stroke="#008a00" stroke-width="4.500"/>`;
  }
  const pts = top_.reduce((s, n, i) => s + n + (i % 2 ? ' ' : ','), '');
  document.getElementById('chart').innerHTML = `<g transform="translate(-52 231) scale(.33333)"><path d="M150 526H1230" stroke="#7d98a8" stroke-width="3"/>${bars}<polyline points="${pts}" fill="none" stroke="#ff8c50" stroke-width="5"/></g>`;
</script>
</body>
</html>
